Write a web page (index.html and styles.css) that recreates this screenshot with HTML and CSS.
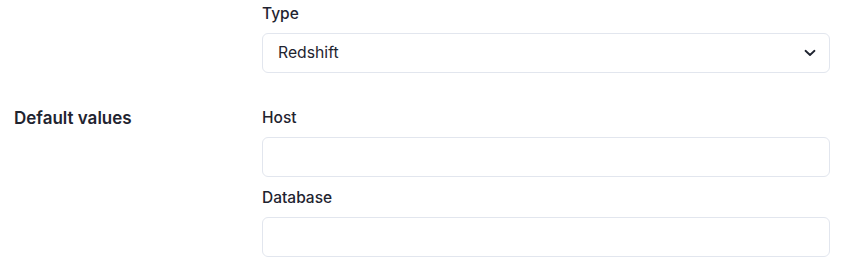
FILE: index.html
```html
<!DOCTYPE html>
<html lang="en">
<head>
<meta charset="utf-8">
<title>Connection settings</title>
<link rel="stylesheet" href="styles.css">
</head>
<body>
<div class="page">
  <section class="section">
    <div class="section-title"></div>
    <div class="fields">
      <div class="field">
        <label class="label" for="type">Type</label>
        <div class="select">
          <span class="select-value">Redshift</span>
          <svg class="chevron" width="12" height="8" viewBox="0 0 12 8" aria-hidden="true">
            <path d="M1.5 1.75 L6 6 L10.5 1.75" fill="none" stroke="#1f2430" stroke-width="1.8" stroke-linecap="round" stroke-linejoin="round"/>
          </svg>
        </div>
      </div>
    </div>
  </section>
  <section class="section section-next">
    <div class="section-title">Default values</div>
    <div class="fields">
      <div class="field">
        <label class="label" for="host">Host</label>
        <input class="input" id="host" type="text">
      </div>
      <div class="field">
        <label class="label" for="db">Database</label>
        <input class="input" id="db" type="text">
      </div>
    </div>
  </section>
</div>
</body>
</html>
```

FILE: styles.css
```css
* { box-sizing: border-box; }
html, body { margin: 0; padding: 0; background: #ffffff; }
body {
  font-family: Inter, "Noto Sans", "Liberation Sans", sans-serif;
  color: #1f2430;
}
.page {
  padding: 4px 24px 0 14px;
}
.section {
  display: grid;
  grid-template-columns: 248px 1fr;
}
.section-next {
  margin-top: 35px;
}
.section-title {
  font-size: 17px;
  font-weight: 600;
  line-height: 20px;
}
.fields {
  display: flex;
  flex-direction: column;
  gap: 11px;
}
.field {
  display: flex;
  flex-direction: column;
  gap: 9px;
}
.label {
  font-size: 15.5px;
  font-weight: 500;
  line-height: 20px;
}
.select, .input {
  height: 40px;
  width: 100%;
  border: 1px solid #e2e6ee;
  border-radius: 6px;
  background: #ffffff;
  font-family: inherit;
  font-size: 15.75px;
  color: #1f2430;
}
.select {
  display: flex;
  align-items: center;
  justify-content: space-between;
  padding: 0 13px 0 15px;
}
.select-value { line-height: 20px; }
.chevron { display: block; }
.input { display: block; padding: 0 15px; outline: none; }
```
